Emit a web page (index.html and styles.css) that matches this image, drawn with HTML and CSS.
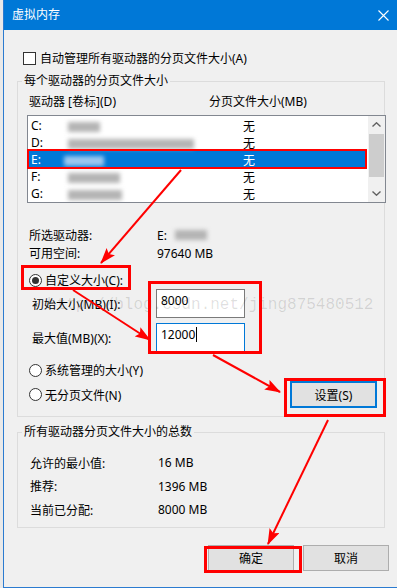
FILE: index.html
```html
<!DOCTYPE html>
<html lang="zh-CN">
<head>
  <meta charset="UTF-8">
  <meta name="viewport" content="width=device-width, initial-scale=1.0">
  <title>虚拟内存</title>
  <link rel="stylesheet" href="styles.css">
</head>
<body>
  <div class="window">
    <div class="titlebar">
      <span class="title">虚拟内存</span>
      <svg class="close" width="11" height="11" viewBox="0 0 11 11">
        <path d="M0.5 0.5L10.5 10.5M10.5 0.5L0.5 10.5" stroke="#fff" stroke-width="1.1" fill="none"/>
      </svg>
    </div>

    <div class="content">
      <div class="check-row"><span class="checkbox"></span>自动管理所有驱动器的分页文件大小(A)</div>

      <fieldset class="group">
        <legend>每个驱动器的分页文件大小</legend>
        <div class="cols">
          <span class="col-drive">驱动器 [卷标](D)</span>
          <span>分页文件大小(MB)</span>
        </div>

        <div class="listbox">
          <div class="rows">
            <div class="row"><span class="drive">C:</span><span class="vol"><i class="blur b-c"></i></span><span>无</span></div>
            <div class="row"><span class="drive">D:</span><span class="vol"><i class="blur b-d"></i></span><span>无</span></div>
            <div class="row selected"><span class="drive">E:</span><span class="vol"><i class="blur b-e"></i></span><span>无</span></div>
            <div class="row"><span class="drive">F:</span><span class="vol"><i class="blur b-f"></i></span><span>无</span></div>
            <div class="row"><span class="drive">G:</span><span class="vol"><i class="blur b-g"></i></span><span>无</span></div>
          </div>
          <div class="scrollbar">
            <div class="sb-btn">
              <svg width="9" height="5" viewBox="0 0 9 5"><path d="M0.5 4.5L4.5 0.8L8.5 4.5" stroke="#606060" stroke-width="1.4" fill="none"/></svg>
            </div>
            <div class="sb-thumb"></div>
            <div class="sb-space"></div>
            <div class="sb-btn">
              <svg width="9" height="5" viewBox="0 0 9 5"><path d="M0.5 0.5L4.5 4.2L8.5 0.5" stroke="#606060" stroke-width="1.4" fill="none"/></svg>
            </div>
          </div>
        </div>

        <div class="info first">
          <span class="key">所选驱动器:</span><span>E:</span><i class="blur b-sel"></i>
        </div>
        <div class="info">
          <span class="key">可用空间:</span><span>97640 MB</span>
        </div>

        <div class="radio-row custom"><span class="radio on"></span>自定义大小(C):</div>
        <div class="edit-row">
          <span class="edit-label">初始大小(MB)(I):</span>
          <div class="edit">8000</div>
        </div>
        <div class="edit-row second">
          <span class="edit-label">最大值(MB)(X):</span>
          <div class="edit focused">12000<span class="caret"></span></div>
        </div>
        <div class="radio-row system"><span class="radio"></span>系统管理的大小(Y)</div>
        <div class="last-row">
          <div class="radio-row"><span class="radio"></span>无分页文件(N)</div>
          <button class="btn btn-set">设置(S)</button>
        </div>
      </fieldset>

      <fieldset class="group totals">
        <legend>所有驱动器分页文件大小的总数</legend>
        <div class="sum first"><span class="key">允许的最小值:</span><span>16 MB</span></div>
        <div class="sum"><span class="key">推荐:</span><span>1396 MB</span></div>
        <div class="sum"><span class="key">当前已分配:</span><span>8000 MB</span></div>
      </fieldset>

      <div class="actions">
        <button class="btn">确定</button>
        <button class="btn">取消</button>
      </div>
    </div>
  </div>

  <span class="watermark">http://blog.csdn.net/jing875480512</span>

  <!-- red annotations drawn over the dialog -->
  <svg class="marks" width="397" height="588" viewBox="0 0 397 588">
    <defs>
      <marker id="head" markerWidth="16" markerHeight="11" refX="15" refY="5.5" orient="auto" markerUnits="userSpaceOnUse">
        <path d="M0 0L16 5.5L0 11L3 5.5z" fill="#f00"/>
      </marker>
    </defs>
    <g fill="none" stroke="#f00">
      <rect x="28" y="150" width="338" height="18" stroke-width="2"/>
      <rect x="22.5" y="266.5" width="107" height="22" stroke-width="3"/>
      <rect x="149.5" y="282.5" width="111" height="70" stroke-width="3"/>
      <rect x="285.5" y="379.5" width="99" height="36" stroke-width="3"/>
      <rect x="205.5" y="547.5" width="95" height="24" stroke-width="3"/>
    </g>
    <g stroke="#f00" stroke-width="2" marker-end="url(#head)">
      <line x1="181" y1="170" x2="101" y2="263"/>
      <line x1="73" y1="290" x2="150" y2="340"/>
      <line x1="213" y1="355" x2="280" y2="392"/>
      <line x1="328" y1="420" x2="268" y2="544"/>
    </g>
  </svg>
</body>
</html>
```

FILE: styles.css
```css
* {
  box-sizing: border-box;
}
body {
  margin: 0;
  width: 397px;
  height: 588px;
  overflow: hidden;
  position: relative;
  background: #e9e9e9;
  font-family: "Noto Sans", "Noto Sans CJK SC", sans-serif;
  font-size: 12px;
  color: #000;
}
.window {
  margin-left: 3px;
  width: 394px;
  height: 588px;
  background: #f0f0f0;
  border-left: 1px solid #2b7bd0;
  border-bottom: 1px solid #2b7bd0;
}
.titlebar {
  height: 30px;
  background: #0078d7;
  color: #fff;
  display: flex;
  align-items: center;
  justify-content: space-between;
  padding: 0 8px;
}
.title {
  line-height: 16px;
}
.content {
  padding: 20px 0 0 13px;
}
.check-row {
  display: flex;
  align-items: center;
  gap: 4px;
  height: 16px;
  padding-left: 6px;
}
.checkbox {
  width: 13px;
  height: 13px;
  border: 1px solid #333;
  background: #fff;
}

/* group boxes */
.group {
  width: 368px;
  margin: 7px 0 0 0;
  padding: 0 7px 8px 9px;
  border: 1px solid #dcdcdc;
  min-width: 0;
}
.group legend {
  padding: 0 2px;
  margin-left: -5px;
  line-height: 16px;
}
.cols {
  display: flex;
  margin-top: 5px;
  line-height: 16px;
  padding-left: 2px;
}
.col-drive {
  width: 180px;
}

/* drive list */
.listbox {
  display: flex;
  width: 359px;
  height: 88px;
  margin-top: 5px;
  border: 1px solid #828790;
  background: #fff;
  overflow: hidden;
}
.rows {
  flex: 1;
  padding-top: 1px;
}
.row {
  display: flex;
  align-items: center;
  height: 17px;
  padding-left: 3px;
  margin-right: 2px;
}
.row.selected {
  background: #0078d7;
  color: #fff;
}
.drive {
  width: 37px;
}
.vol {
  width: 175px;
}
.blur {
  display: inline-block;
  height: 10px;
  vertical-align: middle;
  background: #b4b4b4;
  filter: blur(2px);
}
.b-c { width: 32px; }
.b-d { width: 126px; }
.b-e { width: 40px; background: #9cc8f0; margin-left: -4px; }
.b-f { width: 52px; }
.b-g { width: 54px; }
.b-sel { width: 32px; margin-left: 8px; }
.scrollbar {
  width: 17px;
  display: flex;
  flex-direction: column;
  background: #f0f0f0;
}
.sb-btn {
  height: 17px;
  display: flex;
  align-items: center;
  justify-content: center;
}
.sb-thumb {
  height: 43px;
  margin: 1px 1px 0 1px;
  background: #cdcdcd;
}
.sb-space {
  flex: 1;
}

/* selected drive details */
.info {
  display: flex;
  align-items: center;
  height: 18px;
  padding-left: 2px;
}
.info.first {
  margin-top: 23px;
}
.key {
  width: 128px;
}
.radio-row {
  display: flex;
  align-items: center;
  gap: 3px;
  height: 18px;
  padding-left: 2px;
}
.radio-row.custom {
  margin-top: 9px;
}
.radio-row.system {
  margin-top: 9px;
}
.radio {
  position: relative;
  width: 13px;
  height: 13px;
  border: 1px solid #333;
  border-radius: 50%;
  background: #fff;
}
.radio.on::after {
  content: "";
  position: absolute;
  left: 2px;
  top: 2px;
  width: 7px;
  height: 7px;
  border-radius: 50%;
  background: #333;
}
.edit-row {
  display: flex;
  align-items: center;
  padding-left: 5px;
}
.edit-row.second {
  margin-top: 5px;
}
.edit-label {
  width: 124px;
}
.edit {
  width: 89px;
  height: 29px;
  padding: 3px 4px 0;
  line-height: 16px;
  border: 1px solid #7a7a7a;
  background: #fff;
}
.edit.focused {
  border-color: #0078d7;
}
.caret {
  display: inline-block;
  width: 1px;
  height: 15px;
  margin-left: 1px;
  vertical-align: -3px;
  background: #000;
}
.last-row {
  display: flex;
  align-items: center;
  justify-content: space-between;
  margin-top: 2px;
}
.btn {
  height: 26px;
  width: 86px;
  border: 1px solid #adadad;
  background: #e1e1e1;
  font-family: inherit;
  font-size: 12px;
  color: #000;
  padding: 0;
}
.btn-set {
  width: 87px;
  height: 27px;
  border: 2px solid #0078d7;
}

/* totals */
.totals {
  padding-bottom: 5px;
}
.sum {
  display: flex;
  align-items: center;
  height: 23.5px;
  padding-left: 3px;
}
.sum.first {
  margin-top: 11px;
}
.actions {
  display: flex;
  justify-content: flex-end;
  gap: 9px;
  margin-top: 17px;
  padding-right: 8px;
}

/* overlays */
.watermark {
  position: absolute;
  left: 47px;
  top: 296px;
  font-family: "Liberation Mono", monospace;
  font-size: 16px;
  line-height: 18px;
  color: rgba(0, 0, 0, 0.13);
  pointer-events: none;
}
.marks {
  position: absolute;
  left: 0;
  top: 0;
  pointer-events: none;
}
```
